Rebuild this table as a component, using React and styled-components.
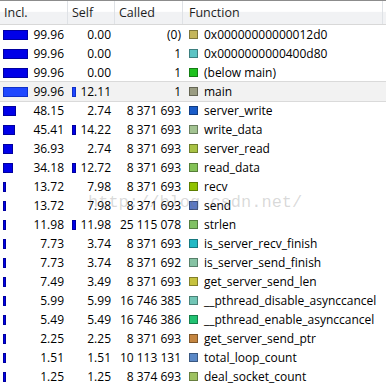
import React from 'react';
import styled, { createGlobalStyle } from 'styled-components';

const GlobalStyle = createGlobalStyle`
  html, body {
    margin: 0;
    padding: 0;
    background: #fff;
  }
  body {
    font-family: "Open Sans", "Liberation Sans", sans-serif;
    font-size: 12px;
    color: #000;
  }
`;

const cols = '68px 47px 68px 200px 1fr';

const Table = styled.div`
  position: relative;
  width: 386px;
  height: 387px;
  overflow: hidden;
  background: #fff;
`;

const Header = styled.div`
  display: grid;
  grid-template-columns: ${cols};
  height: 24px;
  border-top: 1px solid #8c8c8c;
  border-bottom: 1px solid #d8d8d8;
  box-sizing: border-box;
  height: 25px;
`;

const HeadCell = styled.div`
  display: flex;
  align-items: center;
  padding-left: ${(p) => p.$pad || 4}px;
  font-size: 12.5px;
  color: #1e1e1e;
  background: linear-gradient(#ffffff 0%, #ffffff 45%, #f1f2f4 50%, #f1f2f4 100%);
  border-right: 1px solid ${(p) => (p.$last ? 'transparent' : '#dfe2e6')};
`;

const Row = styled.div`
  display: grid;
  grid-template-columns: ${cols};
  height: 19px;
  box-sizing: border-box;
  background: ${(p) => (p.$current ? '#f2f2f2' : 'transparent')};
  border-top: 1px solid ${(p) => (p.$current ? '#dadada' : 'transparent')};
  border-bottom: 1px solid ${(p) => (p.$current ? '#dadada' : 'transparent')};
  margin-top: ${(p) => (p.$current ? '-1px' : '0')};
  margin-bottom: ${(p) => (p.$current ? '-1px' : '0')};
  height: ${(p) => (p.$current ? '21px' : '19px')};
`;

const NumCell = styled.div`
  position: relative;
  display: flex;
  align-items: center;
  justify-content: flex-end;
  padding-right: ${(p) => p.$pad}px;
  white-space: nowrap;
`;

const Bar = styled.span`
  position: absolute;
  left: ${(p) => p.$left}px;
  top: 50%;
  transform: translateY(-50%);
  height: 10px;
  box-sizing: border-box;
  background: ${(p) => (p.$light ? '#1f47ff' : '#0000e8')};
  border: 1px solid ${(p) => (p.$light ? '#1030c8' : '#0000a0')};
`;

const FuncCell = styled.div`
  display: flex;
  align-items: center;
  gap: 6px;
  padding-left: 6px;
  white-space: nowrap;
`;

const Swatch = styled.span`
  width: 9px;
  height: 9px;
  box-sizing: border-box;
  flex: none;
  background: ${(p) => p.$color};
  border: 1px solid rgba(0, 0, 0, 0.35);
`;

const Watermark = styled.div`
  position: absolute;
  left: 88px;
  top: 193px;
  font-family: "Liberation Mono", "DejaVu Sans Mono", monospace;
  font-size: 17px;
  color: rgba(120, 120, 120, 0.28);
  pointer-events: none;
  white-space: nowrap;
`;

const rows = [
  ['99.96', '0.00', '(0)', '#c4b55a', '0x00000000000012d0'],
  ['99.96', '0.00', '1', '#5cc4c4', '0x0000000000400d80'],
  ['99.96', '0.00', '1', '#1fc21f', '(below main)'],
  ['99.96', '12.11', '1', '#9a9c82', 'main', true],
  ['48.15', '2.74', '8 371 693', '#1a5cc8', 'server_write'],
  ['45.41', '14.22', '8 371 693', '#a3c392', 'write_data'],
  ['36.93', '2.74', '8 371 693', '#a8c244', 'server_read'],
  ['34.18', '12.72', '8 371 693', '#84c257', 'read_data'],
  ['13.72', '7.98', '8 371 693', '#90c200', 'recv'],
  ['13.72', '7.98', '8 371 693', '#5a78c4', 'send'],
  ['11.98', '11.98', '25 115 078', '#80c062', 'strlen'],
  ['7.73', '3.74', '8 371 693', '#22b9c4', 'is_server_recv_finish'],
  ['7.73', '3.74', '8 371 692', '#86c3a4', 'is_server_send_finish'],
  ['7.49', '3.49', '8 371 693', '#c6c23e', 'get_server_send_len'],
  ['5.99', '5.99', '16 746 385', '#72c6b6', '__pthread_disable_asynccancel'],
  ['5.49', '5.49', '16 746 386', '#22c272', '__pthread_enable_asynccancel'],
  ['2.25', '2.25', '8 371 693', '#c48540', 'get_server_send_ptr'],
  ['1.51', '1.51', '10 113 131', '#5a88c6', 'total_loop_count'],
  ['1.25', '1.25', '8 374 693', '#9ec262', 'deal_socket_count'],
];

const inclWidth = (v) => Math.max(3, Math.round((parseFloat(v) / 100) * 24 + (v > 20 ? 1.5 : 0)));
const selfWidth = (v) => (parseFloat(v) >= 10 ? 4 : 0);

export default function App() {
  return (
    <Table>
      <GlobalStyle />
      <Header>
        <HeadCell>Incl.</HeadCell>
        <HeadCell>Self</HeadCell>
        <HeadCell>Called</HeadCell>
        <HeadCell $pad={6}>Function</HeadCell>
        <HeadCell $last />
      </Header>
      {rows.map(([incl, self, called, color, name, current]) => (
        <Row key={name} $current={current}>
          <NumCell $pad={4}>
            <Bar $left={3} $light={current} style={{ width: inclWidth(incl) }} />
            {incl}
          </NumCell>
          <NumCell $pad={4}>
            {selfWidth(self) > 0 && (
              <Bar $left={4} $light={current} style={{ width: selfWidth(self) }} />
            )}
            {self}
          </NumCell>
          <NumCell $pad={2}>{called}</NumCell>
          <FuncCell>
            <Swatch $color={color} />
            {name}
          </FuncCell>
          <div />
        </Row>
      ))}
      <Watermark>http://blog.csdn.net/</Watermark>
    </Table>
  );
}
